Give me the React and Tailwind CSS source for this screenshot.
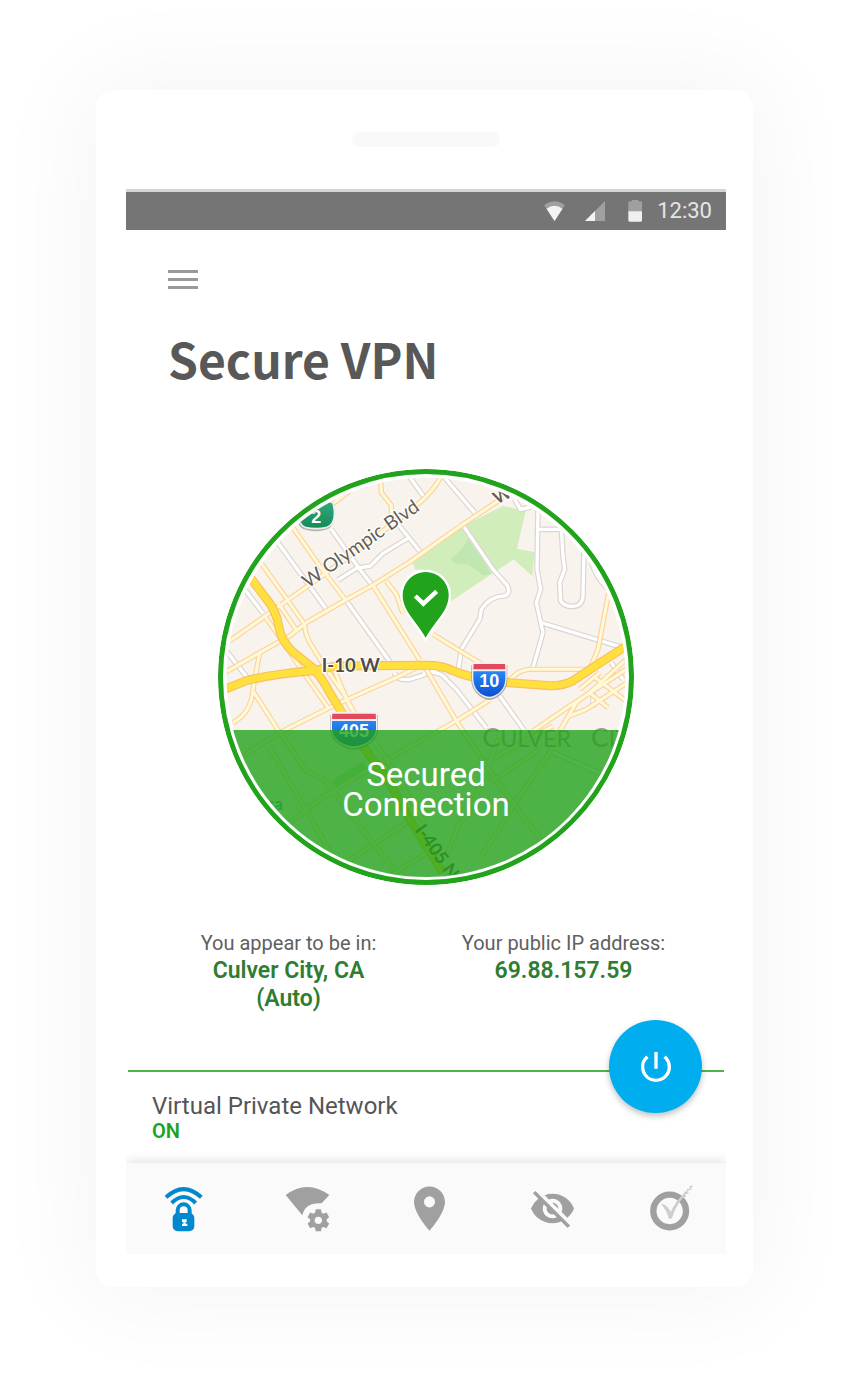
import React from 'react';
import { MdLocationOn, MdVisibilityOff, MdPowerSettingsNew } from 'react-icons/md';

// Road geometry, all in the map's own coordinate space
const highways = [
  'M120 352 L170 418 Q200 455 207 500 Q214 545 250 578 L310 626 Q340 660 360 700 L400 765 L470 875 L540 970 L600 1080 L700 1240',
  'M40 692 L110 664 Q200 642 310 634 L380 620 L650 618 Q700 618 730 634 Q790 660 900 670 L1020 679 Q1060 680 1090 664 L1160 618 L1250 560',
];

const streets = [
  'M60 545 L170 468 L240 418 L330 355 L420 290 L520 215 L600 155 L630 130 Q675 90 695 50',
  'M360 140 L420 95',
  'M45 640 L150 580 L240 530 L290 490 L390 432 L490 377 L600 308 L660 265 L760 195 L880 115',
  'M250 205 L330 320 L410 425',
  'M155 312 L225 410 L285 495 Q285 530 310 565 L350 630',
  'M165 470 L215 540 L285 645 L355 745',
  'M205 430 L260 512',
  'M513 60 L515 100 L545 138 L545 170',
  'M490 378 L630 602',
  'M530 365 L560 405 L580 462',
  'M150 580 L130 690 Q125 760 70 790',
  'M130 695 L210 820 L290 935 L345 960 L420 1060 L550 1230',
  'M60 915 L210 820 L360 745 L480 690 L560 655 L640 615',
  'M375 635 L420 740 L530 900 L650 1100',
  'M350 630 L400 700 L440 770',
  'M180 865 L380 1210',
  'M240 1090 L330 1020 L480 930 L640 840 L740 785 L840 722',
  'M400 1215 L600 1085 L700 1020',
  'M540 1250 L670 1170',
  'M650 630 L740 785 L850 950 L910 1030 L1000 1150',
  'M670 525 L760 580 L830 622',
  'M900 662 Q930 630 960 630 L1140 630 L1165 570 L1197 400',
  'M970 815 L1080 740 L1250 630',
  'M1050 815 L1100 730 L1140 700 L1250 600',
  'M1080 770 L1130 750 L1250 672',
  'M1110 690 L1170 640 M1150 650 L1250 725',
  'M1140 700 L1195 745',
  'M710 1190 L750 1090 L780 1060 L870 830',
  'M810 1200 L930 1010 L1020 880 L1060 810',
  'M790 930 L1030 800 M840 970 L990 870',
];

const lanes = [
  'M205 250 L350 450',
  'M50 575 L125 670',
  'M105 390 L160 462',
  'M365 210 L450 330 L488 378',
  'M410 425 L550 620',
  'M385 362 L440 327 L482 320 L520 282 L598 235',
  'M598 50 L648 120',
  'M545 170 L630 275',
  'M705 55 L795 160',
  'M760 198 L850 330 L893 378 Q905 408 880 410 Q840 412 815 450 L810 480 L755 570 L745 640',
  'M985 145 L982 330 L993 390 L980 430 L1000 520 L970 625',
  'M985 210 L1055 210 L1060 290 L1065 330 L1050 370 L1053 425 Q1065 442 1090 441 Q1118 440 1120 410 L1123 275',
  'M995 490 L1240 565',
  'M1145 305 Q1155 350 1195 390',
  'M915 120 L932 150 L965 143',
  'M640 640 Q690 632 710 660 L740 690 L830 805',
  'M870 710 L945 815',
  'M555 640 Q560 665 600 660 Q640 650 680 630',
  'M1150 700 L1150 745',
  'M1010 870 L1200 955',
  'M1205 610 L1240 660',
];

const RoadSet = ({ paths, casing, fill, casingWidth, fillWidth }) => (
  <g fill="none" strokeLinejoin="round">
    <path d={paths.join(' ')} stroke={casing} strokeWidth={casingWidth} />
    <path d={paths.join(' ')} stroke={fill} strokeWidth={fillWidth} />
  </g>
);

const Interstate = ({ x, y, width, label }) => {
  const h = width / 2;
  return (
    <g transform={`translate(${x} ${y})`}>
      <path d={`M${-h - 2} -46 H${h + 2} V-2 C${h + 2} 30 ${h / 2} 56 0 58 C${-h / 2} 56 ${-h - 2} 30 ${-h - 2} -2Z`} fill="#8e8b88" opacity="0.7" />
      <path d={`M${-h} -56 H${h} V-6 C${h} 26 ${h / 2} 50 0 53 C${-h / 2} 50 ${-h} 26 ${-h} -6Z`} fill="#f3f0f2" />
      <path d={`M${5 - h} -50 H${h - 5} L${h - 4} -34 H${4 - h}Z`} fill="#e4495b" />
      <path d={`M${4 - h} -28 H${h - 4} V-6 C${h - 4} 24 ${h / 2} 46 0 48 C${-h / 2} 46 ${4 - h} 24 ${4 - h} -6Z`} fill="url(#shieldBlue)" />
      <text y="19" textAnchor="middle" fontSize="54" fontWeight="700" fill="#fff" className="font-['Liberation_Sans',sans-serif]">
        {label}
      </text>
    </g>
  );
};

const StreetMap = () => (
  <svg viewBox="25 29 1248 1248" className="block w-full" role="img" aria-label="Map of Culver City">
    <defs>
      <clipPath id="mapClip">
        <circle cx="649" cy="653" r="598" />
      </clipPath>
      <linearGradient id="shieldBlue" x1="0" y1="0" x2="0" y2="1">
        <stop offset="0" stopColor="#2b86f2" />
        <stop offset="1" stopColor="#0a4fd6" />
      </linearGradient>
      <linearGradient id="shieldGreen" x1="0" y1="0" x2="0" y2="1">
        <stop offset="0" stopColor="#38a97f" />
        <stop offset="1" stopColor="#118a58" />
      </linearGradient>
    </defs>

    <g clipPath="url(#mapClip)">
      <rect width="1300" height="1300" fill="#f8f4ed" />

      {/* Parks */}
      <path d="M606 300 L650 280 L760 200 L880 140 L948 155 L922 268 L975 278 L968 350 L912 300 L725 425 L700 380 L640 330 L617 332Z" fill="#d1edbb" />
      <path d="M723 300 L760 265 L775 240 L812 290 L845 345 L820 348 L775 315 L735 312Z" fill="#c0e6b1" />
      <path d="M365 965 L460 905 L480 940 L385 985Z" fill="#c5e7b3" />

      <RoadSet paths={lanes} casing="#dad5d0" fill="#ffffff" casingWidth={17} fillWidth={10} />
      <RoadSet paths={streets} casing="#fbd3a0" fill="#fff9d6" casingWidth={16} fillWidth={9} />
      <RoadSet paths={highways} casing="#f9bf62" fill="#ffe03c" casingWidth={27} fillWidth={20} />

      {/* Labels */}
      <g className="font-['Lato',sans-serif]" fill="#625f5d" stroke="#fff" strokeWidth="7" paintOrder="stroke">
        <text x="295" y="388" fontSize="58" transform="rotate(-35 295 388)">W Olympic Blvd</text>
        <text x="862" y="136" fontSize="52" fontWeight="700" transform="rotate(-28 862 136)">W</text>
        <text x="336" y="637" fontSize="56" fontWeight="700" fill="#4f4b49">I-10 W</text>
        <text x="614" y="1112" fontSize="54" fontWeight="700" fill="#4f4b49" stroke="none" transform="rotate(55 614 1112)">I-405 N</text>
        <text x="155" y="1052" fontSize="52" fontWeight="700" fill="#3da5c4" stroke="none">ica</text>
      </g>
      <g className="font-['Lato',sans-serif]" fontSize="70" fill="#a09a94">
        <text x="818" y="863"><tspan fontSize="80">C</tspan>ULVER</text>
        <text x="1144" y="863"><tspan fontSize="80">C</tspan>ITY</text>
      </g>

      {/* Route shields */}
      <path d="M278 145 Q320 128 362 142 Q385 205 345 212 Q320 220 290 212 Q250 205 278 145Z" fill="#8e8b88" opacity="0.6" />
      <path d="M272 132 Q320 116 370 130 Q384 190 352 204 Q320 212 286 204 Q256 190 272 132Z" fill="url(#shieldGreen)" stroke="#e6efe9" strokeWidth="5" />
      <text x="320" y="192" textAnchor="middle" fontSize="54" fontWeight="700" fill="#fff" className="font-['Liberation_Sans',sans-serif]">2</text>
      <Interstate x={839} y={664} width={104} label="10" />
      <Interstate x={433} y={813} width={140} label="405" />

      {/* Current location */}
      <path d="M648 535 C616 480 579 455 579 407 A69 69 0 0 1 717 407 C717 455 680 480 648 535Z" fill="#22a31c" stroke="#fff" strokeWidth="14" paintOrder="stroke" />
      <path d="M617 410 L641 433 L681 396" fill="none" stroke="#fff" strokeWidth="13" />
    </g>
  </svg>
);

const WifiLockIcon = () => (
  <svg viewBox="105 97 162 162" className="size-[54px]" fill="none" stroke="#0089cd">
    <path d="M138 143 Q191 94 244 143" strokeWidth="12" />
    <path d="M155 160 Q191 124 227 160" strokeWidth="12" />
    <path d="M173 196 V182 A18 18 0 0 1 209 182 V196" strokeWidth="12" />
    <rect x="158" y="190" width="65" height="55" rx="15" fill="#0089cd" stroke="none" />
    <path d="M186 209 H200 V217 H197 V222 H202 V229 H186 V222 H190 V217 H186Z" fill="#fff" stroke="none" />
  </svg>
);

const WifiSettingsIcon = () => (
  <svg viewBox="474 97 162 162" className="size-[54px]" fill="#a0a0a0">
    <path d="M494 136 Q558 88 625 136 L602 161 Q552 158 544 197Z" />
    <circle cx="592" cy="212" r="25" />
    {[0, 60, 120, 180, 240, 300].map((angle) => (
      <path key={angle} d="M582 192 L584 179 H600 L602 192Z" transform={`rotate(${angle} 592 212)`} />
    ))}
    <circle cx="592" cy="212" r="11" fill="#fafafa" />
  </svg>
);

const CheckRingIcon = () => (
  <svg viewBox="674 97 162 162" className="size-[54px]" fill="none">
    <circle cx="736" cy="184" r="49" stroke="#a0a0a0" strokeWidth="19" />
    <path d="M710 163 Q724 160 740 186 Q752 156 778 132 L782 124 L789 126 L787 117 L797 119 L795 110 L805 107 L800 120 L790 123 L793 130 L782 135 L786 141 L776 144 Q752 172 743 206 L734 208 Q726 180 710 163Z" fill="#cecece" />
  </svg>
);

const StatusBar = () => (
  <div className="flex h-[41px] items-center justify-end gap-5 border-t-[3px] border-[#d5d5d5] bg-[#757575] pr-3.5 text-[#e6e6e6]">
    <svg viewBox="78 60 62 60" className="h-5 w-[21px]">
      <path d="M78 72 Q109 50 140 72 L109 120Z" fill="#a0a0a0" />
      <path d="M85 83 Q109 66 133 83 L109 120Z" fill="#f3f3f3" />
    </svg>
    <svg viewBox="198 60 60 60" className="size-5">
      <path d="M258 60 V120 H198Z" fill="#a0a0a0" />
      <path d="M228 90 V120 H198Z" fill="#f3f3f3" />
    </svg>
    <svg viewBox="318 57 60 66" className="h-[22px] w-5">
      <path d="M332 61 H339 V57 H358 V61 H365 Q369 61 369 65 V92 H328 V65 Q328 61 332 61Z" fill="#a0a0a0" />
      <path d="M328 91 H369 V118 Q369 122 365 122 H332 Q328 122 328 118Z" fill="#f0f0f0" />
    </svg>
    <span className="-ml-2 text-[22px] leading-none">12:30</span>
  </div>
);

const navItems = [
  { label: 'Secure VPN', icon: <WifiLockIcon /> },
  { label: 'Wi-Fi settings', icon: <WifiSettingsIcon /> },
  { label: 'Location', icon: <MdLocationOn size={53} /> },
  { label: 'Privacy', icon: <MdVisibilityOff size={47} /> },
  { label: 'Protection', icon: <CheckRingIcon /> },
];

const App = () => {
  return (
    <div className="min-h-screen bg-white px-24 pt-[90px] pb-[102px] font-['Roboto',sans-serif]">
      <div className="rounded-[18px] bg-white pt-[42px] pr-[27px] pb-[33px] pl-[30px] shadow-[0_0_100px_15px_rgba(0,0,0,0.045)]">
        {/* Speaker */}
        <div className="mx-auto mb-[42px] h-[15px] w-37 rounded-full bg-[#f9f9f9]"></div>

        <StatusBar />

        <header className="px-[42px] pt-10">
          <button aria-label="Menu" className="flex w-[30px] flex-col gap-[5px]">
            <span className="h-[3px] w-full bg-[#999999]"></span>
            <span className="h-[3px] w-full bg-[#999999]"></span>
            <span className="h-[3px] w-full bg-[#999999]"></span>
          </button>
          <h1 className="mt-[39px] font-['Noto_Sans_CJK_SC',sans-serif] text-[48px] leading-[60px] font-bold text-[#585858]">Secure VPN</h1>
        </header>

        {/* Connection map */}
        <div className="relative mx-auto mt-[81px] w-[416px] max-w-full overflow-hidden rounded-full">
          <StreetMap />
          <div className="absolute inset-x-2 top-2 bottom-2 flex items-end overflow-hidden rounded-full">
            <div className="h-[147px] w-full bg-[#22a31c]/80 pt-[30px] text-center text-[33px] leading-[30px] text-white">
              Secured
              <br />
              Connection
            </div>
          </div>
          <div className="absolute inset-0 rounded-full border-[5px] border-[#22a31c]"></div>
        </div>

        {/* Location and address */}
        <dl className="mt-11 grid grid-cols-2 px-[25px] text-center leading-7">
          <div>
            <dt className="text-[20px] text-[#606060]">You appear to be in:</dt>
            <dd className="text-[23px] font-semibold text-[#2e7d32]">
              Culver City, CA
              <br />
              (Auto)
            </dd>
          </div>
          <div>
            <dt className="text-[20px] text-[#606060]">Your public IP address:</dt>
            <dd className="text-[23px] font-semibold text-[#2e7d32]">69.88.157.59</dd>
          </div>
        </dl>

        <section className="relative mx-0.5 mt-[57px] h-[93px] border-t-2 border-[#4db547] px-6 pt-[19px]">
          <h2 className="text-[24px] leading-[30px] text-[#555555]">Virtual Private Network</h2>
          <p className="text-[20px] leading-5 font-semibold text-[#22a31c]">ON</p>
          <button
            aria-label="Turn VPN off"
            className="absolute -top-[52px] right-[22px] z-10 flex size-[93px] items-center justify-center rounded-full bg-[#00adef] text-white shadow-[0_3px_6px_rgba(0,0,0,0.25)]"
          >
            <MdPowerSettingsNew size={40} />
          </button>
        </section>

        {/* Bottom navigation */}
        <nav className="flex h-[91px] items-center justify-between bg-[#fafafa] pr-[23px] pl-[29px] text-[#a0a0a0] shadow-[0_-2px_10px_rgba(0,0,0,0.12)] [clip-path:inset(-20px_0_0_0)]">
          {navItems.map((item) => (
            <button key={item.label} aria-label={item.label} className="flex size-[54px] items-center justify-center">
              {item.icon}
            </button>
          ))}
        </nav>
      </div>
    </div>
  );
};

export default App;
